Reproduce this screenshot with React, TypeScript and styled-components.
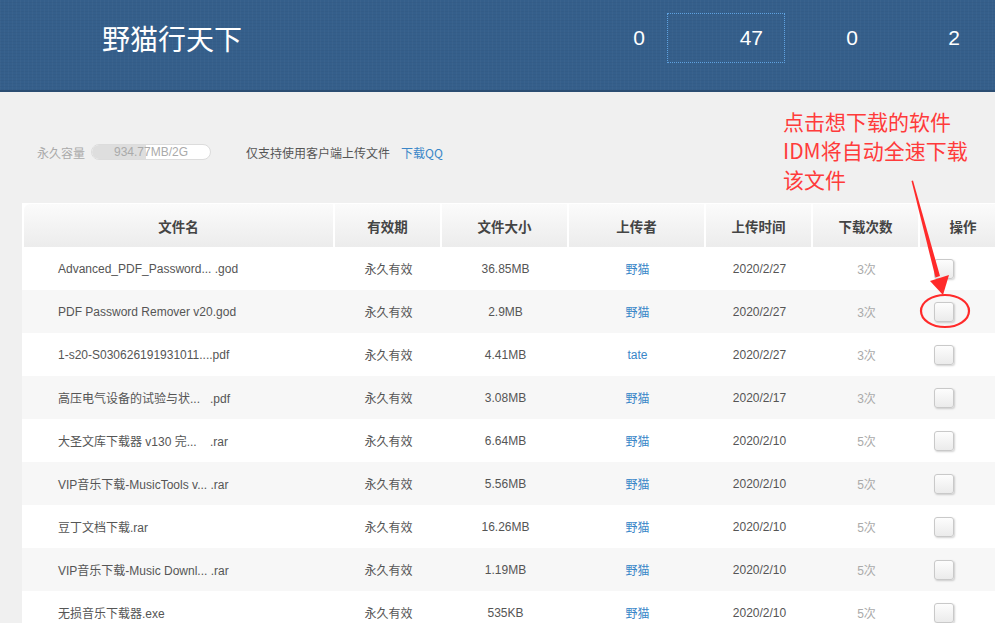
import styled, { createGlobalStyle } from "styled-components";

const GlobalStyle = createGlobalStyle`
  html, body {
    margin: 0;
    padding: 0;
    overflow: hidden;
    background: #f0f0f0;
    font-family: "Liberation Sans", "Noto Sans CJK SC", sans-serif;
  }
`;

const Page = styled.div`
  position: relative;
  width: 995px;
  min-height: 623px;
`;

const Header = styled.header`
  height: 92px;
  box-sizing: border-box;
  padding-bottom: 14px;
  display: flex;
  align-items: center;
  background-color: #355f8b;
  background-image:
    repeating-linear-gradient(90deg, rgba(255, 255, 255, 0.025) 0 1px, transparent 1px 4px),
    repeating-linear-gradient(0deg, rgba(0, 0, 0, 0.03) 0 1px, transparent 1px 3px);
  border-bottom: 2px solid #2b4d72;
`;

const Title = styled.h1`
  margin: 0 0 0 102px;
  font-size: 28px;
  font-weight: normal;
  color: #fff;
  font-family: "Noto Sans CJK SC", sans-serif;
`;

const Stats = styled.div`
  margin-left: auto;
  margin-right: 13px;
  display: flex;
  align-items: center;
`;

const Stat = styled.a<{ $w: number; $active?: boolean }>`
  width: ${(p) => p.$w}px;
  height: 50px;
  box-sizing: border-box;
  padding-right: 21px;
  display: flex;
  align-items: center;
  justify-content: flex-end;
  color: #fff;
  font-size: 21px;
  font-family: "Liberation Sans", sans-serif;
  border: 1px dotted ${(p) => (p.$active ? "#5fa2e0" : "transparent")};
`;

const Content = styled.div`
  padding: 0 0 0 22px;
`;

const StorageRow = styled.div`
  display: flex;
  align-items: center;
  height: 16px;
  margin: 52px 0 0 15px;
  font-size: 12px;
  font-family: "Noto Sans CJK SC", sans-serif;
`;

const Muted = styled.span`
  color: #aaa;
  margin-right: 6px;
`;

const Bar = styled.div`
  position: relative;
  width: 120px;
  height: 16px;
  box-sizing: border-box;
  border: 1px solid #dcdcdc;
  border-radius: 8px;
  background: #fff;
  overflow: hidden;
  display: flex;
  align-items: center;
  justify-content: center;
  margin-right: 35px;
`;

const BarFill = styled.div`
  position: absolute;
  left: 0;
  top: 0;
  bottom: 0;
  background: #dedede;
`;

const BarText = styled.span`
  position: relative;
  color: #aaa;
  font-size: 12px;
  font-family: "Liberation Sans", sans-serif;
`;

const Note = styled.span`
  color: #555;
  margin-right: 11px;
`;

const Link = styled.a`
  color: #3a86c8;
`;

const Table = styled.div`
  margin-top: 43px;
  width: 988px;
  background: #fff;
  padding: 1px 0 0 2px;
`;

const cols = "311px 107px 127px 137px 107px 107px 88px";

const HeadRow = styled.div`
  display: grid;
  grid-template-columns: ${cols};
  height: 43px;
`;

const HeadCell = styled.div<{ $first?: boolean }>`
  display: flex;
  align-items: center;
  justify-content: center;
  margin-right: 2px;
  background: linear-gradient(#fbfbfb, #ececec);
  border-top-left-radius: ${(p) => (p.$first ? "6px" : "0")};
  color: #444;
  font-weight: bold;
  font-size: 13.5px;
  font-family: "Noto Sans CJK SC", sans-serif;
`;

const Row = styled.div<{ $alt: boolean }>`
  display: grid;
  grid-template-columns: ${cols};
  height: 43px;
  margin-left: -2px;
  padding-left: 2px;
  background: ${(p) => (p.$alt ? "#f7f7f7" : "#fff")};
  font-size: 12px;
  color: #555;
  font-family: "Liberation Sans", "Noto Sans CJK SC", sans-serif;
`;

const Cell = styled.div<{ $pad?: number; $color?: string }>`
  display: flex;
  align-items: center;
  justify-content: ${(p) => (p.$pad !== undefined ? "flex-start" : "center")};
  padding-left: ${(p) => p.$pad ?? 0}px;
  color: ${(p) => p.$color ?? "#555"};
  white-space: pre;
  overflow: hidden;
`;

const Check = styled.span`
  width: 20px;
  height: 20px;
  box-sizing: border-box;
  border: 1px solid #c9c9c9;
  border-radius: 3px;
  background: linear-gradient(#fdfdfd, #ebebeb);
  box-shadow: 1px 1px 2px rgba(0, 0, 0, 0.18);
`;

const Annotation = styled.div`
  position: absolute;
  left: 783px;
  top: 107px;
  color: #ff3b3b;
  font-size: 21px;
  line-height: 29px;
  font-family: "Noto Sans CJK SC", sans-serif;
`;

const Overlay = styled.svg`
  position: absolute;
  left: 0;
  top: 0;
  pointer-events: none;
`;

const headers = ["文件名", "有效期", "文件大小", "上传者", "上传时间", "下载次数", "操作"];

const files = [
  { name: "Advanced_PDF_Password... .god", size: "36.85MB", user: "野猫", date: "2020/2/27", count: "3次" },
  { name: "PDF Password Remover v20.god", size: "2.9MB", user: "野猫", date: "2020/2/27", count: "3次" },
  { name: "1-s20-S030626191931011....pdf", size: "4.41MB", user: "tate", date: "2020/2/27", count: "3次" },
  { name: "高压电气设备的试验与状...   .pdf", size: "3.08MB", user: "野猫", date: "2020/2/17", count: "3次" },
  { name: "大圣文库下载器 v130 完...    .rar", size: "6.64MB", user: "野猫", date: "2020/2/10", count: "5次" },
  { name: "VIP音乐下载-MusicTools v... .rar", size: "5.56MB", user: "野猫", date: "2020/2/10", count: "5次" },
  { name: "豆丁文档下载.rar", size: "16.26MB", user: "野猫", date: "2020/2/10", count: "5次" },
  { name: "VIP音乐下载-Music Downl... .rar", size: "1.19MB", user: "野猫", date: "2020/2/10", count: "5次" },
  { name: "无损音乐下载器.exe", size: "535KB", user: "野猫", date: "2020/2/10", count: "5次" },
];

const stats = [
  { v: "0", w: 118 },
  { v: "47", w: 118, active: true },
  { v: "0", w: 95 },
  { v: "2", w: 102 },
];

export default function App() {
  const used = 934.77 / 2048;
  return (
    <Page>
      <GlobalStyle />
      <Header>
        <Title>野猫行天下</Title>
        <Stats>
          {stats.map((s, i) => (
            <Stat key={i} $w={s.w} $active={s.active}>
              {s.v}
            </Stat>
          ))}
        </Stats>
      </Header>
      <Content>
        <StorageRow>
          <Muted>永久容量</Muted>
          <Bar>
            <BarFill style={{ width: `${used * 100}%` }} />
            <BarText>934.77MB/2G</BarText>
          </Bar>
          <Note>仅支持使用客户端上传文件</Note>
          <Link>下载QQ</Link>
        </StorageRow>
        <Table>
          <HeadRow>
            {headers.map((h, i) => (
              <HeadCell key={h} $first={i === 0}>
                {h}
              </HeadCell>
            ))}
          </HeadRow>
          {files.map((f, i) => (
            <Row key={i} $alt={i % 2 === 1}>
              <Cell $pad={34}>{f.name}</Cell>
              <Cell>永久有效</Cell>
              <Cell>{f.size}</Cell>
              <Cell $color="#3a86c8">{f.user}</Cell>
              <Cell>{f.date}</Cell>
              <Cell $color="#aaa">{f.count}</Cell>
              <Cell $pad={14}>
                <Check />
              </Cell>
            </Row>
          ))}
        </Table>
      </Content>
      <Annotation>
        点击想下载的软件
        <br />
        IDM将自动全速下载
        <br />
        该文件
      </Annotation>
      <Overlay width="995" height="623" viewBox="0 0 995 623">
        <polygon points="911.5,181 913,180.5 940,276 935.5,277.5" fill="#ff2a2a" />
        <polygon points="930,281 949,275 943,295" fill="#ff2a2a" />
        <ellipse cx="945" cy="311" rx="24" ry="16" fill="none" stroke="#ff2a2a" strokeWidth="2.2" />
      </Overlay>
    </Page>
  );
}
